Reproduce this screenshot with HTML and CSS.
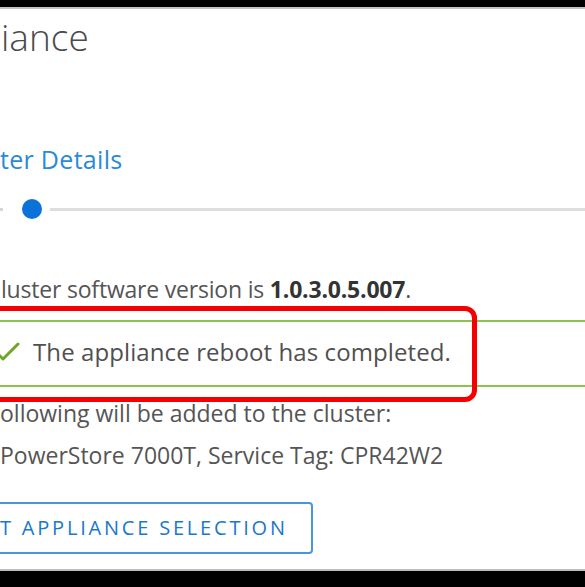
FILE: index.html
```html
<!DOCTYPE html>
<html lang="en">
<head>
    <meta charset="UTF-8">
    <meta name="viewport" content="width=device-width, initial-scale=1.0">
    <title>Add Appliance</title>
    <link rel="stylesheet" href="styles.css">
</head>
<body>
    <div class="frame">
        <div class="edge-top"></div>
        <div class="content">
            <h1 class="title">iance</h1>
            <h2 class="step-title">ter Details</h2>
            <div class="stepper">
                <span class="step-line-prev"></span>
                <span class="step-dot"></span>
                <span class="step-line"></span>
            </div>
            <p class="text version">luster software version is <strong>1.0.3.0.5.007</strong>.</p>
            <div class="alert">
                <svg class="alert-icon" width="26" height="22" viewBox="0 0 26 22">
                    <path d="M2 12 L8 18 L23 3" fill="none" stroke="#6aa82a" stroke-width="3" stroke-linecap="round" stroke-linejoin="round"/>
                </svg>
                <span class="alert-text">The appliance reboot has completed.</span>
            </div>
            <p class="text following">ollowing will be added to the cluster:</p>
            <p class="text appliance">PowerStore 7000T, Service Tag: CPR42W2</p>
            <button class="btn-outline">T APPLIANCE SELECTION</button>
        </div>
        <div class="edge-bottom"></div>
        <div class="highlight"></div>
    </div>
</body>
</html>
```

FILE: styles.css
```css
body {
    margin: 0;
    font-family: "Open Sans", Arial, sans-serif;
    background: #fff;
}
.frame {
    position: relative;
    width: 585px;
    height: 587px;
    overflow: hidden;
    display: flex;
    flex-direction: column;
}
.edge-top {
    height: 7px;
    background: #000;
    border-bottom: 2px solid #c4c4c4;
}
.content {
    flex: 1;
    display: flex;
    flex-direction: column;
    align-items: flex-start;
}
.edge-bottom {
    height: 16px;
    background: #000;
    border-top: 2px solid #bdbdbd;
}
.title {
    margin: 6px 0 0 1px;
    font-size: 37px;
    line-height: 44px;
    font-weight: 300;
    color: #4a4a4a;
}
.step-title {
    margin: 84px 0 0 0;
    font-size: 25px;
    line-height: 32px;
    font-weight: 400;
    letter-spacing: 0.3px;
    color: #2a8ad8;
}
.stepper {
    align-self: stretch;
    margin-top: 24px;
    height: 20px;
    display: flex;
    align-items: center;
}
.step-line-prev {
    width: 3px;
    height: 3px;
    background: #d6d6d6;
}
.step-dot {
    margin-left: 19px;
    width: 20px;
    height: 20px;
    border-radius: 50%;
    background: #0a72d8;
}
.step-line {
    flex: 1;
    margin-left: 8px;
    height: 3px;
    background: #dedede;
}
.text {
    margin: 0;
    font-size: 23px;
    line-height: 30px;
    color: #555;
}
.text strong {
    font-weight: 700;
    color: #333;
}
.version {
    margin-top: 55px;
    margin-left: 1px;
    letter-spacing: -0.2px;
}
.alert {
    align-self: stretch;
    margin-top: 16px;
    padding: 15px 0 18px;
    border-top: 2px solid #8cc34c;
    border-bottom: 2px solid #8cc34c;
    display: flex;
    align-items: center;
}
.alert-icon {
    margin-left: -5px;
}
.alert-text {
    margin-left: 12px;
    font-size: 24px;
    line-height: 30px;
    letter-spacing: 0.1px;
    color: #505050;
}
.following {
    margin-top: 11px;
}
.appliance {
    margin-top: 12px;
}
.btn-outline {
    margin: 32px 0 0 -14px;
    padding: 12px 23px 12px 12px;
    font-family: "Open Sans", Arial, sans-serif;
    font-size: 20px;
    line-height: 24px;
    font-weight: 500;
    letter-spacing: 2.8px;
    color: #1878cc;
    background: #fff;
    border: 2px solid #4b96d8;
    border-radius: 4px;
}
/* red annotation drawn over the screenshot */
.highlight {
    position: absolute;
    left: -20px;
    top: 306px;
    width: 487px;
    height: 86px;
    border: 5px solid #f40000;
    border-radius: 12px;
}
```
